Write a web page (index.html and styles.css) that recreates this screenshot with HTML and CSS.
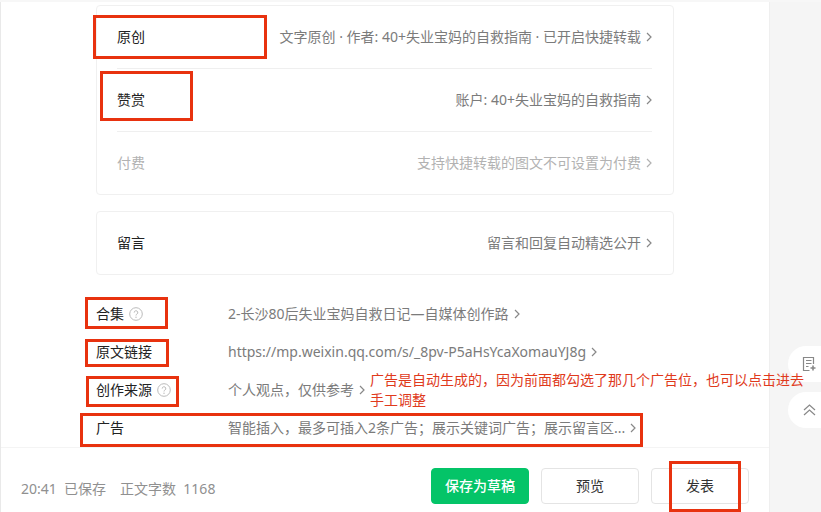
FILE: index.html
```html
<!DOCTYPE html>
<html lang="zh-CN">
<head>
<meta charset="utf-8">
<meta name="viewport" content="width=device-width, initial-scale=1">
<title>文章设置</title>
<link rel="stylesheet" href="styles.css">
</head>
<body>
<svg width="0" height="0" class="defs" aria-hidden="true">
  <symbol id="chevron" viewBox="0 0 6 10"><path d="M1 1l4 4-4 4" fill="none" stroke="currentColor" stroke-width="1.200"/></symbol>
  <symbol id="help" viewBox="0 0 14 14"><circle cx="7" cy="7" r="6.3" fill="none" stroke="currentColor"/><path d="M5.2 5.600a1.800 1.800 0 1 1 2.700 1.500c-.6.4-.9.6-.9 1.400" fill="none" stroke="currentColor"/><circle cx="7" cy="10.200" r=".7" fill="currentColor"/></symbol>
</svg>
<div class="page">
  <main class="editor">
    <div class="settings">
      <section class="card">
        <a class="card-row" href="#"><span class="name">原创</span><span class="value">文字原创 · 作者: 40+失业宝妈的自救指南 · 已开启快捷转载</span><svg class="chevron"><use href="#chevron"/></svg></a>
        <a class="card-row" href="#"><span class="name">赞赏</span><span class="value">账户: 40+失业宝妈的自救指南</span><svg class="chevron"><use href="#chevron"/></svg></a>
        <a class="card-row disabled" href="#"><span class="name">付费</span><span class="value">支持快捷转载的图文不可设置为付费</span><svg class="chevron"><use href="#chevron"/></svg></a>
      </section>
      <section class="card">
        <a class="card-row" href="#"><span class="name">留言</span><span class="value">留言和回复自动精选公开</span><svg class="chevron"><use href="#chevron"/></svg></a>
      </section>
      <section class="options">
        <div class="option"><span class="label">合集<svg class="help"><use href="#help"/></svg></span><a class="link" href="#"><span class="text">2-长沙80后失业宝妈自救日记—自媒体创作路</span><svg class="chevron"><use href="#chevron"/></svg></a></div>
        <div class="option"><span class="label">原文链接</span><a class="link" href="#"><span class="text">https://mp.weixin.qq.com/s/_8pv-P5aHsYcaXomauYJ8g</span><svg class="chevron"><use href="#chevron"/></svg></a></div>
        <div class="option"><span class="label">创作来源<svg class="help"><use href="#help"/></svg></span><a class="link" href="#"><span class="text">个人观点，仅供参考</span><svg class="chevron"><use href="#chevron"/></svg></a></div>
        <div class="option"><span class="label">广告</span><a class="link" href="#"><span class="text">智能插入，最多可插入2条广告；展示关键词广告；展示留言区...</span><svg class="chevron"><use href="#chevron"/></svg></a></div>
      </section>
    </div>
    <footer class="toolbar">
      <p class="status"><span class="saved">20:41&nbsp; 已保存</span><span>正文字数&nbsp; 1168</span></p>
      <div class="actions">
        <button class="btn primary" type="button">保存为草稿</button>
        <button class="btn" type="button">预览</button>
        <button class="btn" type="button">发表</button>
      </div>
    </footer>
  </main>
  <aside class="rail">
    <button class="pill" type="button" aria-label="模板">
      <svg width="16" height="16" viewBox="0 0 16 16" fill="none" stroke="currentColor"><path d="M12.500 8V1.500h-10v13h6M5 4.500h5.500M5 7.500h5.500M5 10.500h2.500" stroke-width="1.200"/><path d="M12 9.500v5M9.500 12h5" stroke-width="1.600"/></svg>
    </button>
    <button class="pill" type="button" aria-label="回到顶部">
      <svg width="16" height="16" viewBox="0 0 16 16" fill="none" stroke="currentColor" stroke-width="1.200"><path d="M3 8l5.500-5L14 8M3 13l5.500-5 5.500 5"/></svg>
    </button>
  </aside>
  <div class="mark mark-original"></div>
  <div class="mark mark-reward"></div>
  <div class="mark mark-album"></div>
  <div class="mark mark-source-link"></div>
  <div class="mark mark-origin"></div>
  <div class="mark mark-ads"></div>
  <div class="mark mark-publish"></div>
  <p class="note">广告是自动生成的，因为前面都勾选了那几个广告位，也可以点击进去<br>手工调整</p>
</div>
</body>
</html>
```
FILE: styles.css
```css
* { box-sizing: border-box; }

body {
  margin: 0;
  background: #f5f5f5;
  color: #222;
  font: 14px/20px "Noto Sans", "Noto Sans CJK SC", sans-serif;
}

p { margin: 0; }
a { color: inherit; text-decoration: none; }
.defs { position: absolute; }

.page {
  position: relative;
  display: flex;
  min-height: 100vh;
  overflow: hidden;
  border-top: 2px solid #f7f7f7;
}

.editor {
  flex: 1;
  min-width: 0;
  display: flex;
  flex-direction: column;
  background: #fff;
  border-left: 1px solid #e9e9e9;
  border-right: 1px solid #efefef;
}

.settings {
  flex: 1;
  padding: 3px 95px 0;
}

.card {
  padding: 0 21px 0 20px;
  margin-bottom: 16px;
  border: 1px solid #f0f0f0;
  border-radius: 4px;
}

.card-row {
  display: flex;
  align-items: center;
  height: 63px;
  border-bottom: 1px solid #efefef;
}

.card-row:last-child { height: 62px; border-bottom: 0; }
.name { flex: 1; }
.value { color: #7b7b7b; white-space: nowrap; }
.disabled, .disabled .value { color: #b2b2b2; }

.chevron {
  flex: none;
  width: 6px;
  height: 10px;
  margin-left: 5px;
  color: #888;
}

.disabled .chevron { color: #b2b2b2; }
.options { padding-top: 4px; }

.option {
  display: flex;
  align-items: center;
  height: 38px;
}

.label {
  display: flex;
  align-items: center;
  flex: none;
  width: 132px;
}

.help {
  width: 14px;
  height: 14px;
  margin-left: 5px;
  color: #bbb;
}

.link {
  display: flex;
  align-items: center;
  color: #7b7b7b;
  white-space: nowrap;
}

.toolbar {
  display: flex;
  justify-content: space-between;
  height: 65px;
  padding: 20px 20px 0;
  border-top: 1px solid #f4f4f4;
}

.status {
  display: flex;
  gap: 14px;
  padding-top: 11px;
  color: #909090;
}

.actions { display: flex; gap: 12px; }

.btn {
  width: 98px;
  height: 36px;
  padding: 0;
  border: 1px solid #e4e4e4;
  border-radius: 4px;
  background: #fff;
  color: #333;
  font: inherit;
}

.btn.primary {
  border-color: #04c468;
  background: #04c468;
  color: #fff;
  font-weight: 500;
}

.rail {
  display: flex;
  flex: none;
  flex-direction: column;
  align-items: flex-end;
  justify-content: flex-end;
  gap: 10px;
  width: 51px;
  padding-bottom: 84px;
  background: #f5f5f5;
}

.pill {
  display: flex;
  align-items: center;
  width: 33px;
  height: 36px;
  padding: 0 0 0 13px;
  border: 0;
  border-radius: 18px 0 0 18px;
  background: #fff;
  color: #888;
}

/* Review annotations drawn over the page */
.mark {
  position: absolute;
  border: 3px solid #e8320f;
  pointer-events: none;
}

.mark-original { left: 93px; top: 13px; width: 174px; height: 44px; }
.mark-reward { left: 100px; top: 69px; width: 93px; height: 50px; }
.mark-album { left: 85px; top: 295px; width: 83px; height: 32px; }
.mark-source-link { left: 85px; top: 337px; width: 84px; height: 28px; }
.mark-origin { left: 86px; top: 374px; width: 93px; height: 31px; }
.mark-ads { left: 80px; top: 411px; width: 563px; height: 34px; }
.mark-publish { left: 669px; top: 459px; width: 72px; height: 51px; }

.note {
  position: absolute;
  left: 370px;
  top: 368px;
  color: #e03a1c;
  white-space: nowrap;
}
```
